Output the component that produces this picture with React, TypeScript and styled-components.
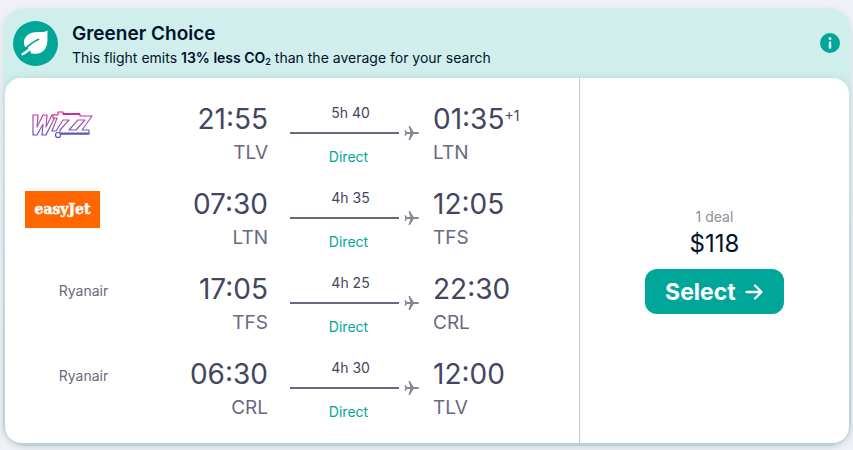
import React from "react";
import styled, { createGlobalStyle } from "styled-components";

const GlobalStyle = createGlobalStyle`
  *, *::before, *::after { box-sizing: border-box; }
  body {
    margin: 0;
    background: #eff1f6;
    color: #05203c;
    font-family: Inter, "Liberation Sans", sans-serif;
  }
  h2, p, ul { margin: 0; padding: 0; }
`;

const Ticket = styled.article`
  margin: 8px 2px 4px 3px;
  padding: 0 2px 3px;
  border-radius: 22px;
  background: linear-gradient(#d0eeeb 60px, #b9dad7 100%);
  box-shadow: 0 2px 6px rgba(37, 32, 31, 0.1);
`;

const Banner = styled.header`
  display: flex;
  align-items: center;
  gap: 14px;
  height: 70px;
  padding: 0 9px 0 8px;
  color: #02122c;
`;

const LeafBadge = styled.span`
  display: grid;
  place-items: center;
  flex: none;
  width: 45px;
  height: 45px;
  border-radius: 50%;
  background: #00a698;
`;

const BannerText = styled.div`
  flex: 1;
  min-width: 0;
  padding-top: 4px;
`;

const BannerTitle = styled.h2`
  font-size: 19px;
  line-height: 26px;
  font-weight: 600;
`;

const BannerNote = styled.p`
  font-size: 14px;
  line-height: 22px;
  font-weight: 400;

  strong { font-weight: 600; }
  sub { font-size: 9px; line-height: 1; vertical-align: -2px; }
`;

const InfoButton = styled.button`
  display: grid;
  place-items: center;
  width: 20px;
  height: 20px;
  padding: 0;
  border: 0;
  border-radius: 50%;
  background: #00a698;
  cursor: pointer;
`;

const Body = styled.div`
  display: grid;
  grid-template-columns: 68fr 32fr;
  border-radius: 16px;
  background: #fff;
  box-shadow: 0 0 8px rgba(37, 32, 31, 0.08);
`;

const Legs = styled.ul`
  list-style: none;
  padding: 13px 0 12px 20px;
`;

const Leg = styled.li`
  display: grid;
  grid-template-columns: 117px 126px 130px 1fr;
  padding: 12px 0 7px;
`;

const Carrier = styled.div`
  display: flex;
  align-items: center;
  height: 60px;
  margin-top: -12px;
`;

const CarrierName = styled.span`
  flex: 1;
  text-align: center;
  font-size: 14px;
  line-height: 20px;
  font-weight: 400;
  color: #68697f;
`;

const EasyJetLogo = styled.span`
  display: grid;
  place-items: center;
  width: 75px;
  height: 37px;
  margin-top: 6px;
  background: #ff6600;
  color: #fff;
  font: 700 14px/18px "DejaVu Serif", serif;
  -webkit-text-stroke: 0.5px #fff;
`;

const Stop = styled.div<{ $align: "left" | "right" }>`
  text-align: ${(p) => p.$align};
  padding-left: ${(p) => (p.$align === "left" ? "35px" : "0")};
`;

const Time = styled.div`
  margin-bottom: 2px;
  font-size: 28px;
  line-height: 32px;
  font-weight: 400;
  color: #444560;

  sup { font-size: 14px; line-height: 1; vertical-align: 8px; }
`;

const Airport = styled.div`
  font-size: 19px;
  line-height: 32px;
  font-weight: 400;
  color: #68697f;
`;

const Journey = styled.div`
  margin-left: 22px;
  margin-right: -21px;
  text-align: center;
`;

const Caption = styled.div<{ $direct?: boolean }>`
  margin: ${(p) => (p.$direct ? "4px 12px 0 0" : "0 8px 0 0")};
  font-size: 14px;
  line-height: 20px;
  font-weight: 400;
  color: ${(p) => (p.$direct ? "#00a698" : "#444560")};
`;

const Track = styled.div`
  display: flex;
  align-items: center;
  gap: 5px;
  height: 20px;

  &::before {
    content: "";
    flex: 1;
    height: 2px;
    background: #68697f;
  }
`;

const Offer = styled.section`
  display: flex;
  flex-direction: column;
  align-items: center;
  justify-content: center;
  border-left: 1px solid #c9c9d2;
`;

const Deals = styled.p`
  font-size: 14px;
  line-height: 20px;
  font-weight: 400;
  color: #8f8d99;
`;

const Price = styled.p`
  font-size: 24px;
  line-height: 34px;
  font-weight: 400;
  color: #02122c;
`;

const SelectButton = styled.button`
  display: flex;
  align-items: center;
  gap: 8px;
  height: 45px;
  margin-top: 8px;
  padding: 0 20px;
  border: 0;
  border-radius: 12px;
  background: #00a698;
  color: #fff;
  font: 700 23px/28px Inter, "Liberation Sans", sans-serif;
  cursor: pointer;
`;

const LeafIcon = () => (
  <svg width="45" height="45" viewBox="0 0 45 45" aria-hidden="true">
    <path
      d="M34.5 9.5C31 12 26 10.500 20 11.500C13 12.800 9.500 19 11.500 24.500C12.500 28.500 15 31.500 19 32.500C26 34 32.500 30.500 34 23.500C35 18.500 34.200 14 34.500 9.500Z"
      fill="#fff"
    />
    <path d="M8 30L14 25.500L18 31L15 35.500L7 37Z" fill="#00a698" />
    <path d="M25.500 18.500C20 20 15 26 9.500 29.500" fill="none" stroke="#00a698" strokeWidth="1.800" strokeLinecap="round" />
    <path d="M9.500 33.300C13 31.500 16 28.500 20 25.500" fill="none" stroke="#fff" strokeWidth="2.400" strokeLinecap="round" />
  </svg>
);

const InfoIcon = () => (
  <svg width="20" height="20" viewBox="0 0 20 20" aria-hidden="true">
    <circle cx="10" cy="5.5" r="1.5" fill="#d0eeeb" />
    <path d="M10 9.5V14.5" stroke="#d0eeeb" strokeWidth="2.6" strokeLinecap="round" />
  </svg>
);

const PlaneIcon = () => (
  <svg width="15" height="16" viewBox="0 0 16 16" aria-hidden="true">
    <path
      d="M16 8C16 7.3 15.3 7 14.5 7H10.3L6.3 .5H4.8L6.7 7H3.2L1.8 5H.5L1.3 8L.5 11H1.8L3.2 9H6.7L4.8 15.5H6.3L10.3 9H14.5C15.3 9 16 8.7 16 8Z"
      fill="#8a8495"
    />
  </svg>
);

const ArrowIcon = () => (
  <svg width="20" height="20" viewBox="0 0 20 20" aria-hidden="true">
    <path
      d="M2.500 10H17M11 3.5L17.5 10L11 16.5"
      fill="none"
      stroke="#fff"
      strokeWidth="2.3"
      strokeLinecap="round"
      strokeLinejoin="round"
    />
  </svg>
);

const WizzMark = styled.svg`
  margin-top: 4px;
`;

const WizzLogo = () => (
  <WizzMark width="75" height="37" viewBox="0 0 75 37" role="img" aria-label="Wizz">
    <defs>
      <linearGradient id="wizz" gradientUnits="userSpaceOnUse" x1="0" y1="5" x2="0" y2="32">
        <stop offset="0" stopColor="#e0148c" />
        <stop offset="0.5" stopColor="#a560b5" />
        <stop offset="1" stopColor="#3f55b5" />
      </linearGradient>
    </defs>
    <g fill="#fff" stroke="url(#wizz)" strokeWidth="1.2" strokeLinejoin="round">
      <path d="M8 10H13L12 22L18 10H22L21 22L27 10H31L21 30H17L18 19L12 30H8Z" />
      <path d="M33 7H38V9H55V11H67L57 25H64V29H35V25L44 15H38L31 26H27L32 13H28V10H33Z" />
      <path d="M44 25L53 15H60L51 25Z" />
      <path d="M38 9H55M36 28.500H64" fill="none" strokeWidth="1.800" />
      <circle cx="33" cy="30" r="2.5" />
    </g>
  </WizzMark>
);

interface LegData {
  carrier: React.ReactNode;
  depart: string;
  from: string;
  duration: string;
  arrive: string;
  to: string;
  nextDay?: boolean;
}

const legs: LegData[] = [
  { carrier: <WizzLogo />, depart: "21:55", from: "TLV", duration: "5h 40", arrive: "01:35", to: "LTN", nextDay: true },
  { carrier: <EasyJetLogo>easyJet</EasyJetLogo>, depart: "07:30", from: "LTN", duration: "4h 35", arrive: "12:05", to: "TFS" },
  { carrier: <CarrierName>Ryanair</CarrierName>, depart: "17:05", from: "TFS", duration: "4h 25", arrive: "22:30", to: "CRL" },
  { carrier: <CarrierName>Ryanair</CarrierName>, depart: "06:30", from: "CRL", duration: "4h 30", arrive: "12:00", to: "TLV" },
];

export default function App() {
  return (
    <>
      <GlobalStyle />
      <Ticket>
        <Banner>
          <LeafBadge><LeafIcon /></LeafBadge>
          <BannerText>
            <BannerTitle>Greener Choice</BannerTitle>
            <BannerNote>
              This flight emits <strong>13% less CO<sub>2</sub></strong> than the average for your search
            </BannerNote>
          </BannerText>
          <InfoButton type="button" aria-label="More information"><InfoIcon /></InfoButton>
        </Banner>
        <Body>
          <Legs>
            {legs.map((leg) => (
              <Leg key={leg.depart}>
                <Carrier>{leg.carrier}</Carrier>
                <Stop $align="right">
                  <Time>{leg.depart}</Time>
                  <Airport>{leg.from}</Airport>
                </Stop>
                <Journey>
                  <Caption>{leg.duration}</Caption>
                  <Track><PlaneIcon /></Track>
                  <Caption $direct>Direct</Caption>
                </Journey>
                <Stop $align="left">
                  <Time>{leg.arrive}{leg.nextDay && <sup>+1</sup>}</Time>
                  <Airport>{leg.to}</Airport>
                </Stop>
              </Leg>
            ))}
          </Legs>
          <Offer>
            <Deals>1 deal</Deals>
            <Price>$118</Price>
            <SelectButton type="button">Select <ArrowIcon /></SelectButton>
          </Offer>
        </Body>
      </Ticket>
    </>
  );
}
